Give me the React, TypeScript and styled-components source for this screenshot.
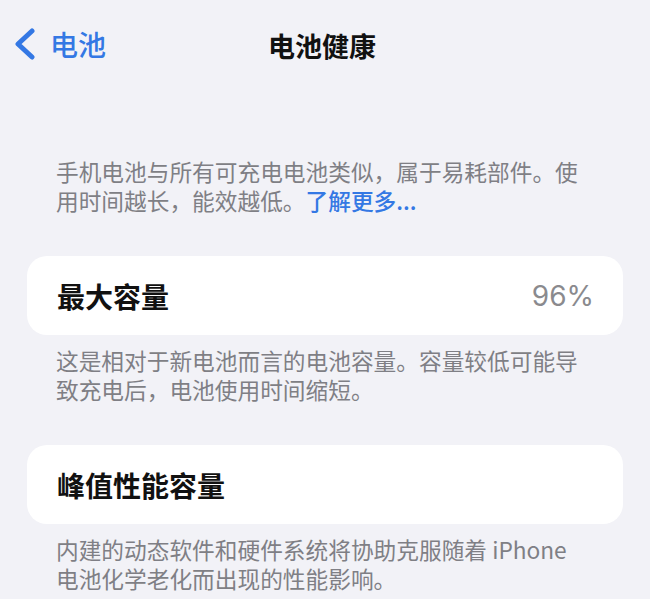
import styled, { createGlobalStyle } from 'styled-components';

const GlobalStyle = createGlobalStyle`
  html, body {
    margin: 0;
    padding: 0;
    background: #f2f2f7;
  }
  body {
    font-family: "Noto Sans CJK SC", "Noto Sans", sans-serif;
    -webkit-font-smoothing: antialiased;
  }
`;

const BLUE = '#3478e4';

interface IRow {
  label: string;
  value?: string;
  note: string;
}

const rows: IRow[] = [
  {
    label: '最大容量',
    value: '96%',
    note: '这是相对于新电池而言的电池容量。容量较低可能导致充电后，电池使用时间缩短。',
  },
  {
    label: '峰值性能容量',
    note: '内建的动态软件和硬件系统将协助克服随着 iPhone 电池化学老化而出现的性能影响。',
  },
];

export default function App() {
  return (
    <>
      <GlobalStyle />
      <Screen>
        <NavBar>
          <BackButton>
            <svg width="24" height="32" viewBox="0 0 24 32">
              <polyline
                points="19,3 5,16 19,29"
                fill="none"
                stroke={BLUE}
                strokeWidth="5"
                strokeLinecap="round"
                strokeLinejoin="round"
              />
            </svg>
            <BackLabel>电池</BackLabel>
          </BackButton>
          <Title>电池健康</Title>
          <span />
        </NavBar>

        <Content>
          <Intro>
            <span>手机电池与所有可充电电池类似，属于易耗部件。使用时间越长，能效越低。</span>
            <LearnMore>了解更多...</LearnMore>
          </Intro>

          {rows.map((row) => (
            <Section key={row.label}>
              <Card>
                <Label>{row.label}</Label>
                {row.value && <Value>{row.value}</Value>}
              </Card>
              <Note>{row.note}</Note>
            </Section>
          ))}
        </Content>
      </Screen>
    </>
  );
}

const Screen = styled.div`
  width: 650px;
  min-height: 599px;
  overflow: hidden;
`;

const NavBar = styled.div`
  display: grid;
  grid-template-columns: 1fr auto 1fr;
  align-items: center;
  height: 90px;
  padding: 0 13px;
  box-sizing: border-box;
`;

const BackButton = styled.div`
  display: flex;
  align-items: center;
  gap: 13px;
  color: ${BLUE};
  margin-top: -2px;
`;

const BackLabel = styled.span`
  font-size: 28px;
  font-weight: 500;
  line-height: 1;
`;

const Title = styled.div`
  font-size: 27px;
  font-weight: 700;
  color: #111;
  line-height: 1;
  margin-left: -6px;
`;

const Content = styled.div`
  padding: 0 27px;
`;

const FooterText = styled.p`
  margin: 0;
  padding: 0 35px 0 29px;
  font-size: 22.7px;
  line-height: 29px;
  color: #7f7f85;
`;

const Intro = styled(FooterText)`
  margin-top: 67px;
`;

const LearnMore = styled.span`
  color: ${BLUE};
  font-weight: 500;
`;

const Section = styled.section`
  margin-top: 41px;
`;

const Card = styled.div`
  display: flex;
  align-items: center;
  justify-content: space-between;
  height: 79px;
  padding: 0 29px 0 30px;
  background: #fff;
  border-radius: 20px;
`;

const Label = styled.span`
  font-size: 28px;
  font-weight: 700;
  color: #111;
`;

const Value = styled.span`
  font-family: Inter, "Liberation Sans", sans-serif;
  font-size: 28px;
  color: #8a8a8e;
`;

const Note = styled(FooterText)`
  margin-top: 11px;
`;
